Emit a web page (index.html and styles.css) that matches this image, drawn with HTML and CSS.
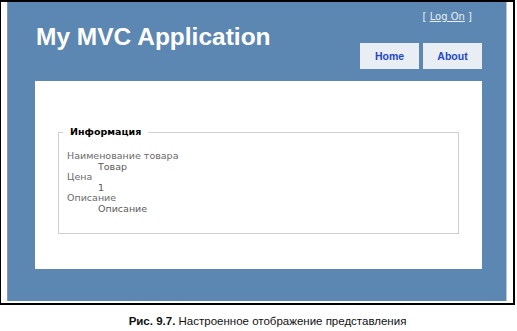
FILE: index.html
```html
<!DOCTYPE html>
<html lang="ru">
<head>
    <meta charset="UTF-8">
    <title>My MVC Application</title>
    <link rel="stylesheet" href="styles.css">
</head>
<body>
    <div class="frame">
        <div class="page">
            <div class="header">
                <h1 class="title">My MVC Application</h1>
                <div class="header-right">
                    <div class="logon">[ <a href="#">Log On</a> ]</div>
                    <ul class="menu">
                        <li><a href="#">Home</a></li>
                        <li><a href="#">About</a></li>
                    </ul>
                </div>
            </div>
            <div class="main">
                <fieldset class="info">
                    <legend>Информация</legend>
                    <div class="fields">
                        <div class="label">Наименование товара</div>
                        <div class="value">Товар</div>
                        <div class="label">Цена</div>
                        <div class="value">1</div>
                        <div class="label">Описание</div>
                        <div class="value">Описание</div>
                    </div>
                </fieldset>
            </div>
        </div>
    </div>
    <p class="caption"><b>Рис. 9.7.</b> Настроенное отображение представления</p>
</body>
</html>
```

FILE: styles.css
```css
body {
    margin: 0;
    background-color: #fff;
    font-family: "DejaVu Sans", sans-serif;
}
.frame {
    width: 515px;
    box-sizing: border-box;
    border: 2px solid #000;
    border-left-width: 1px;
    padding: 0 6px 2px 6px;
    background-color: #fff;
}
.page {
    height: 299px;
    background-color: #5c87b2;
    border-left: 1px solid #8c9aa8;
    border-right: 1px solid #b8c4d0;
    display: flex;
    flex-direction: column;
}
.header {
    display: flex;
    justify-content: space-between;
    height: 77px;
    padding: 0 24px 0 28px;
}
.title {
    margin: 21px 0 0 0;
    font-family: "Liberation Sans", Arial, sans-serif;
    font-size: 24.5px;
    font-weight: bold;
    color: #fff;
    line-height: 27px;
}
.header-right {
    display: flex;
    flex-direction: column;
    align-items: flex-end;
}
.logon {
    margin: 9px 10px 0 0;
    font-size: 10px;
    line-height: 12px;
    color: #e8eef4;
}
.logon a {
    color: #e8eef4;
}
.menu {
    list-style: none;
    margin: 20px 0 0 0;
    padding: 0;
    display: flex;
    gap: 4px;
}
.menu li a {
    display: block;
    width: 59px;
    height: 26px;
    line-height: 26px;
    background-color: #e8eef4;
    color: #1f47cc;
    font-family: "Liberation Sans", Arial, sans-serif;
    font-size: 10.5px;
    font-weight: bold;
    text-align: center;
    text-decoration: none;
}
.main {
    margin: 2px 24px 0 27px;
    height: 188px;
    box-sizing: border-box;
    background-color: #fff;
    padding: 45px 23px 0 23px;
}
.info {
    margin: 0;
    border: 1px solid #cfcfcf;
    padding: 0 4px 18px 4px;
}
.info legend {
    padding: 0 7px;
    font-size: 9.5px;
    font-weight: bold;
    line-height: 12px;
    color: #000;
}
.fields {
    padding: 13px 0 0 4px;
    font-size: 9.5px;
    line-height: 10.6px;
    color: #6a6a6a;
}
.value {
    padding-left: 31px;
    color: #5a5a5a;
}
.caption {
    margin: 10px 0 0 0;
    padding-left: 18px;
    text-align: center;
    font-family: "Liberation Sans", Arial, sans-serif;
    font-size: 11.5px;
    color: #111;
}
```
